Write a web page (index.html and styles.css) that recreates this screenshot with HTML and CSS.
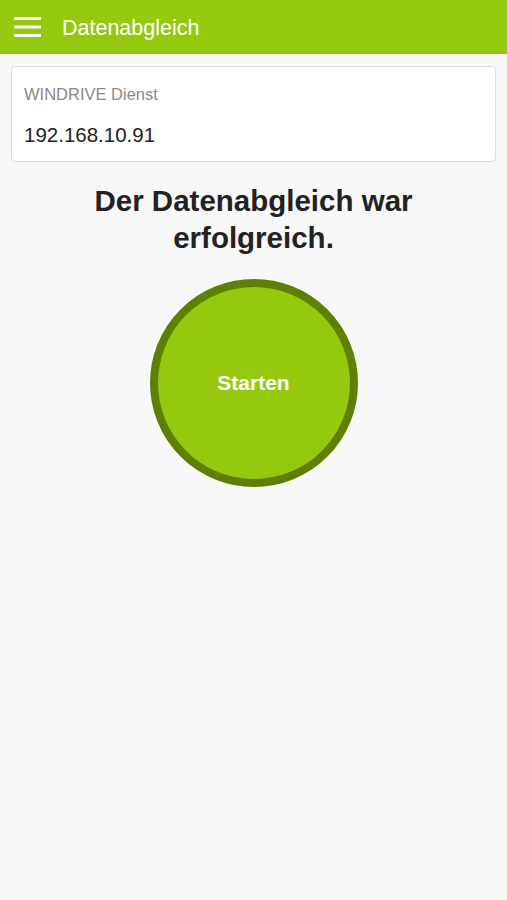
FILE: index.html
```html
<!DOCTYPE html>
<html lang="de">
<head>
    <meta charset="UTF-8">
    <meta name="viewport" content="width=device-width, initial-scale=1.0">
    <title>Datenabgleich</title>
    <link rel="stylesheet" href="styles.css">
</head>
<body>
    <header class="topbar">
        <button class="menu-btn" aria-label="Menü">
            <svg width="27" height="20" viewBox="0 0 27 20">
                <rect x="0" y="0" width="27" height="3" fill="#fff"/>
                <rect x="0" y="8.5" width="27" height="3" fill="#fff"/>
                <rect x="0" y="17" width="27" height="3" fill="#fff"/>
            </svg>
        </button>
        <h1 class="topbar-title">Datenabgleich</h1>
    </header>

    <main class="content">
        <div class="card">
            <label class="card-label" for="service">WINDRIVE Dienst</label>
            <input class="card-input" id="service" type="text" value="192.168.10.91">
        </div>

        <h2 class="status">Der Datenabgleich war erfolgreich.</h2>

        <button class="start-btn">Starten</button>
    </main>
</body>
</html>
```

FILE: styles.css
```css
body {
    margin: 0;
    font-family: 'Liberation Sans', Arial, sans-serif;
    background-color: #f8f8f8;
    color: #222;
}
.topbar {
    display: flex;
    align-items: center;
    height: 54px;
    background-color: #95c90d;
    padding: 0 14px;
    box-sizing: border-box;
}
.menu-btn {
    display: flex;
    padding: 0;
    margin: 0 21px 0 0;
    border: none;
    background: none;
}
.topbar-title {
    margin: 0;
    color: #fff;
    font-size: 21.5px;
    font-weight: normal;
    padding-top: 3px;
}
.content {
    padding: 12px 11px;
    display: flex;
    flex-direction: column;
    align-items: center;
}
.card {
    align-self: stretch;
    background-color: #fff;
    border: 1px solid #dcdcdc;
    border-radius: 4px;
    padding: 18px 12px 14px;
}
.card-label {
    display: block;
    color: #8a8a8a;
    font-size: 16.5px;
}
.card-input {
    display: block;
    width: 100%;
    box-sizing: border-box;
    margin-top: 19px;
    padding: 0;
    border: none;
    background: none;
    font-family: inherit;
    font-size: 20.5px;
    color: #222;
    outline: none;
}
.status {
    margin: 20px 0 0;
    width: 360px;
    text-align: center;
    font-size: 29.5px;
    line-height: 37px;
    font-weight: bold;
    color: #222;
}
.start-btn {
    margin-top: 23px;
    width: 208px;
    height: 208px;
    border-radius: 50%;
    border: 8px solid #5f7f00;
    background-color: #95c90d;
    color: #fff;
    font-family: inherit;
    font-size: 21px;
    font-weight: bold;
    cursor: pointer;
}
```
